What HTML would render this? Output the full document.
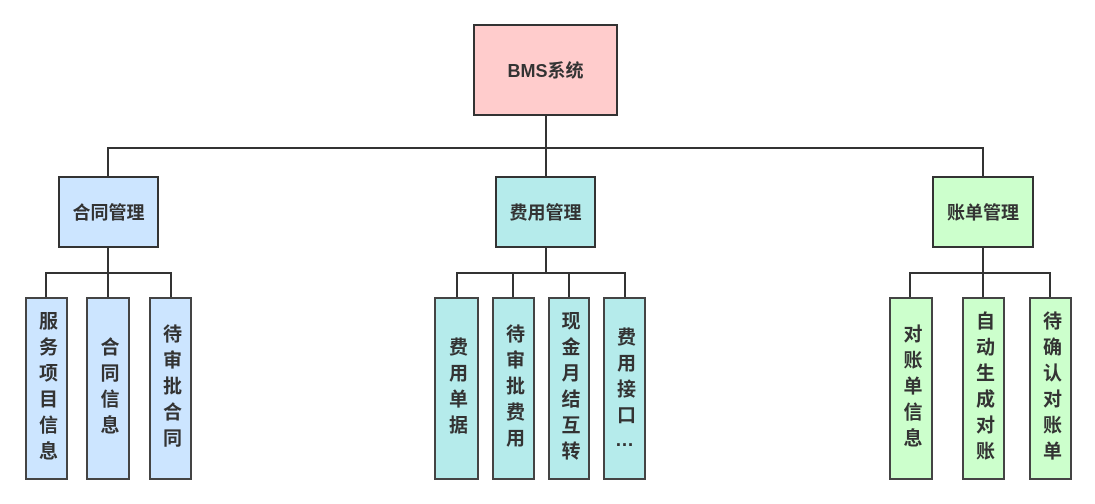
<!DOCTYPE html>
<html><head><meta charset="utf-8"><style>
body{margin:0;width:1095px;height:504px;background:#fff;position:relative;overflow:hidden;font-family:"Liberation Sans","Noto Sans CJK SC",sans-serif;font-weight:bold;color:#333}
.b{position:absolute;box-sizing:border-box;border:2px solid #333;display:flex;align-items:center;justify-content:center;text-align:center}
.m{font-size:18px}
.l{font-size:19px;line-height:25px;writing-mode:vertical-rl;letter-spacing:7px;border-color:#444}
.h{position:absolute;background:#333;height:2px}
.v{position:absolute;background:#333;width:2px}
.bl{background:#cce5ff}.te{background:#b5ebeb}.gr{background:#ccffcc}
.e{text-combine-upright:all;letter-spacing:0}
</style></head><body>
<div class="v" style="left:545px;top:115px;height:62px"></div>
<div class="h" style="left:107px;top:147px;width:877px"></div>
<div class="v" style="left:107px;top:147px;height:30px"></div>
<div class="v" style="left:982px;top:147px;height:30px"></div>
<div class="b m" style="left:473px;top:24px;width:145px;height:92px;background:#ffcccc">BMS系统</div>
<div class="b m bl" style="left:58px;top:176px;width:101px;height:72px">合同管理</div>
<div class="b m te" style="left:495px;top:176px;width:101px;height:72px">费用管理</div>
<div class="b m gr" style="left:932px;top:176px;width:102px;height:72px">账单管理</div>

<div class="v" style="left:107px;top:248px;height:50px"></div>
<div class="h" style="left:45px;top:272px;width:127px"></div>
<div class="v" style="left:45px;top:272px;height:26px"></div>
<div class="v" style="left:170px;top:272px;height:26px"></div>

<div class="v" style="left:545px;top:248px;height:25px"></div>
<div class="h" style="left:456px;top:272px;width:170px"></div>
<div class="v" style="left:456px;top:272px;height:26px"></div>
<div class="v" style="left:512px;top:272px;height:26px"></div>
<div class="v" style="left:568px;top:272px;height:26px"></div>
<div class="v" style="left:624px;top:272px;height:26px"></div>

<div class="v" style="left:982px;top:248px;height:50px"></div>
<div class="h" style="left:909px;top:272px;width:142px"></div>
<div class="v" style="left:909px;top:272px;height:26px"></div>
<div class="v" style="left:1049px;top:272px;height:26px"></div>

<div class="b l bl" style="left:25px;top:297px;width:43px;height:183px">服务项目信息</div>
<div class="b l bl" style="left:86px;top:297px;width:44px;height:183px">合同信息</div>
<div class="b l bl" style="left:149px;top:297px;width:43px;height:183px">待审批合同</div>

<div class="b l te" style="left:434px;top:297px;width:45px;height:183px">费用单据</div>
<div class="b l te" style="left:492px;top:297px;width:43px;height:183px">待审批费用</div>
<div class="b l te" style="left:548px;top:297px;width:42px;height:183px">现金月结互转</div>
<div class="b l te" style="left:603px;top:297px;width:43px;height:183px"><span>费用接口<span class="e">…</span></span></div>

<div class="b l gr" style="left:889px;top:297px;width:44px;height:183px">对账单信息</div>
<div class="b l gr" style="left:962px;top:297px;width:43px;height:183px">自动生成对账</div>
<div class="b l gr" style="left:1029px;top:297px;width:43px;height:183px">待确认对账单</div>
</body></html>
